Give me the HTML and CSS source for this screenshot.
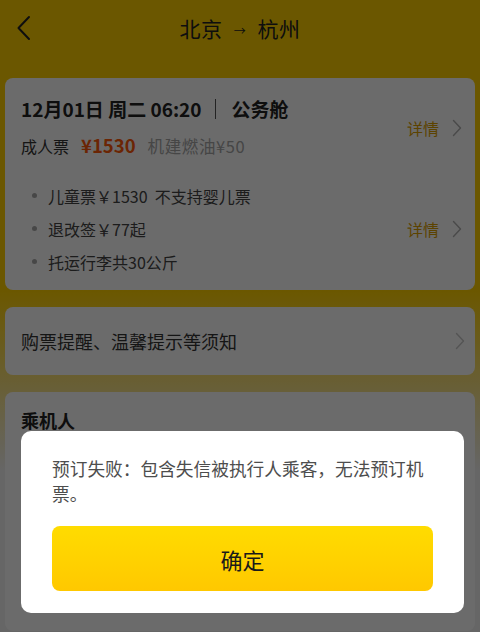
FILE: index.html
```html
<!DOCTYPE html>
<html lang="zh-CN">
<head>
<meta charset="utf-8">
<title>北京 → 杭州</title>
<link rel="stylesheet" href="styles.css">
</head>
<body>
<div class="page">
  <header class="topbar">
    <svg class="back" width="16" height="26" viewBox="0 0 16 26"><path d="M13 2 L2.5 13 L13 24" fill="none" stroke="#222" stroke-width="2" stroke-linecap="round" stroke-linejoin="round"/></svg>
    <h1 class="title">北京 <span class="arrow">→</span> 杭州</h1>
  </header>

  <section class="card flight">
    <div class="flight-head">
      <div class="flight-main">
        <div class="date-line">12月01日 周二 06:20<span class="sep"></span>公务舱</div>
        <div class="price-line"><span>成人票</span><span class="price">¥1530</span><span class="tax">机建燃油¥50</span></div>
      </div>
      <a class="more">详情<svg class="chev" width="10" height="18" viewBox="0 0 10 18"><path d="M1.5 1.5 L8.5 9 L1.5 16.5" fill="none" stroke="#b0b0b0" stroke-width="1.4" stroke-linecap="round" stroke-linejoin="round"/></svg></a>
    </div>
    <ul class="bullets">
      <li><span>儿童票￥1530&nbsp;&nbsp;不支持婴儿票</span></li>
      <li><span>退改签￥77起</span><a class="more">详情<svg class="chev" width="10" height="18" viewBox="0 0 10 18"><path d="M1.5 1.5 L8.5 9 L1.5 16.5" fill="none" stroke="#b0b0b0" stroke-width="1.4" stroke-linecap="round" stroke-linejoin="round"/></svg></a></li>
      <li><span>托运行李共30公斤</span></li>
    </ul>
  </section>

  <section class="card notice">
    <span>购票提醒、温馨提示等须知</span>
    <svg class="chev" width="10" height="18" viewBox="0 0 10 18"><path d="M1.5 1.5 L8.5 9 L1.5 16.5" fill="none" stroke="#c8c8c8" stroke-width="1.4" stroke-linecap="round" stroke-linejoin="round"/></svg>
  </section>

  <section class="card passengers">
    <h2 class="sec-title">乘机人</h2>
  </section>
</div>

<div class="mask">
  <div class="dialog">
    <p class="msg">预订失败：包含失信被执行人乘客，无法预订机票。</p>
    <button class="ok">确定</button>
  </div>
</div>
</body>
</html>
```

FILE: styles.css
```css
* { box-sizing: border-box; }
html, body { margin: 0; padding: 0; }
body {
  width: 480px;
  height: 632px;
  overflow: hidden;
  font-family: "Noto Sans CJK SC", "Noto Sans", sans-serif;
  color: #333;
  background: #f2f2f2;
}
.page {
  height: 632px;
  padding: 0 5px;
  background: linear-gradient(180deg, #ffd000 0, #ffd000 290px, #f2f2f2 470px);
}
.topbar {
  height: 78px;
  display: flex;
  align-items: flex-start;
  justify-content: center;
  position: relative;
}
.back {
  position: absolute;
  left: 11px;
  top: 15px;
}
.title {
  margin: 11px 0 0;
  font-size: 21px;
  font-weight: 400;
  line-height: 34px;
  color: #222;
  letter-spacing: 0.5px;
}
.arrow {
  font-size: 12px;
  display: inline-block;
  margin: 0 6px;
  vertical-align: 1px;
}
.card {
  background: #fff;
  border-radius: 8px;
  margin-bottom: 17px;
}
.flight {
  padding: 18px 13px 12px 16px;
}
.flight-head {
  display: flex;
  align-items: center;
  justify-content: space-between;
}
.date-line {
  font-size: 19px;
  font-weight: 700;
  line-height: 26px;
  color: #222;
  display: flex;
  align-items: center;
}
.sep {
  display: inline-block;
  width: 1px;
  height: 20px;
  background: #555;
  margin: 0 15px 0 14px;
}
.price-line {
  margin-top: 10px;
  font-size: 16px;
  line-height: 26px;
  display: flex;
  align-items: baseline;
  gap: 12px;
  color: #333;
}
.price {
  color: #ff5a0a;
  font-weight: 700;
  font-size: 18.5px;
}
.tax {
  color: #a6a6a6;
  font-size: 16.5px;
  letter-spacing: 0.6px;
}
.more {
  display: flex;
  align-items: center;
  gap: 13px;
  font-size: 16px;
  color: #dca000;
}
.bullets {
  list-style: none;
  margin: 20px 0 0;
  padding: 0;
}
.bullets li {
  display: flex;
  justify-content: space-between;
  align-items: center;
  height: 33px;
  font-size: 16px;
  color: #444;
  padding-left: 27px;
  position: relative;
}
.bullets li::before {
  content: "";
  position: absolute;
  left: 11px;
  top: 14px;
  width: 5px;
  height: 5px;
  border-radius: 50%;
  background: #aaa;
}
.notice {
  height: 68px;
  display: flex;
  align-items: center;
  justify-content: space-between;
  padding: 0 10px 0 16px;
  font-size: 18px;
  color: #333;
}
.passengers {
  height: 239px;
  margin-bottom: 0;
  padding: 14px 16px;
}
.sec-title {
  margin: 0;
  font-size: 18px;
  font-weight: 700;
  line-height: 28px;
  color: #222;
}
.mask {
  position: fixed;
  inset: 0;
  background: rgba(0, 0, 0, 0.58);
  display: flex;
  justify-content: center;
  align-items: flex-start;
}
.dialog {
  margin-top: 431px;
  width: 443px;
  margin-left: 5px;
  background: #fff;
  border-radius: 10px;
  padding: 25px 31px 22px;
}
.msg {
  margin: 0;
  font-size: 17.7px;
  line-height: 25px;
  color: #4d4d4d;
}
.ok {
  display: block;
  width: 100%;
  height: 65px;
  margin-top: 20px;
  border: none;
  border-radius: 8px;
  background: linear-gradient(180deg, #ffdc00, #ffc800);
  font-family: inherit;
  font-size: 22px;
  color: #1a1a1a;
}
```
